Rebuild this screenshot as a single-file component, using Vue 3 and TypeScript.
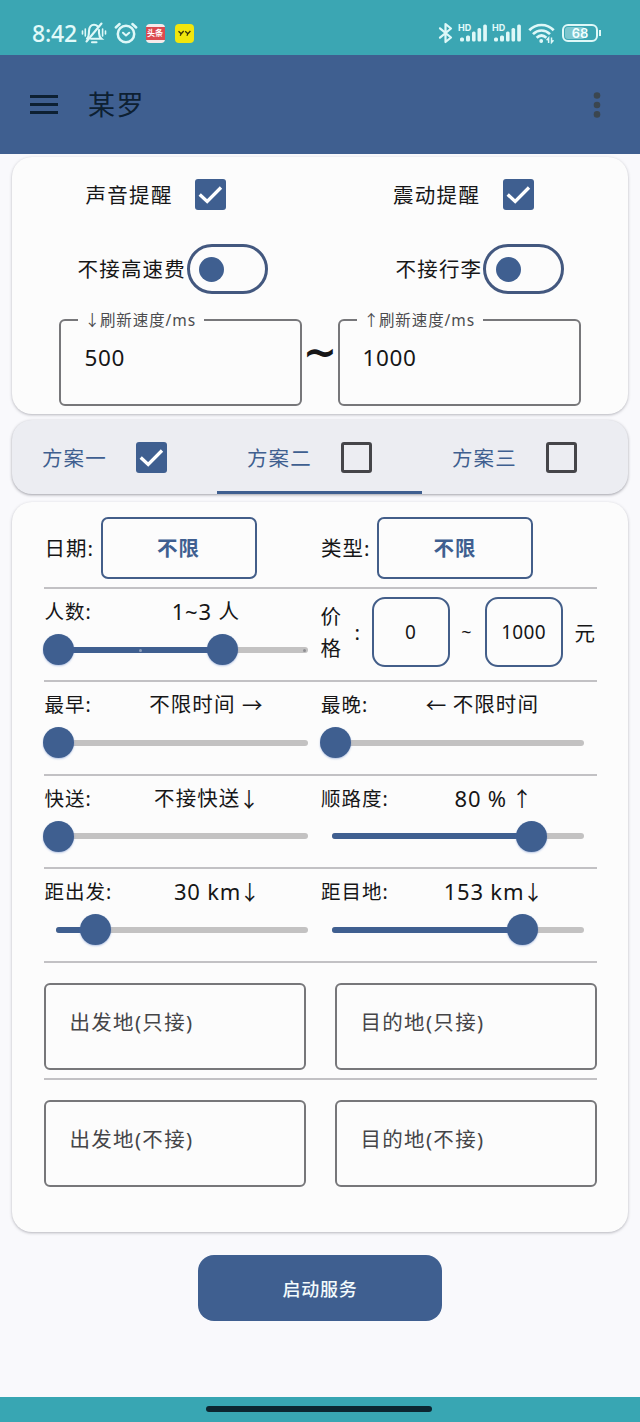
<script setup lang="ts">
import { ref } from 'vue'

interface SliderItem {
  label: string
  value: string
  pos: number
}

interface Part {
  text: string
  kind: string
}

const plans = ref([
  { name: '方案一', checked: true },
  { name: '方案二', checked: false },
  { name: '方案三', checked: false },
])
const activePlan = ref(1)

const reminders = ref([
  { name: '声音提醒', side: 'left' },
  { name: '震动提醒', side: 'right' },
])
const switches = ref([
  { name: '不接高速费', side: 'left' },
  { name: '不接行李', side: 'right' },
])

const sliderRows = ref<SliderItem[][]>([
  [
    { label: '最早:', value: '不限时间 →', pos: 0 },
    { label: '最晚:', value: '← 不限时间', pos: 0 },
  ],
  [
    { label: '快送:', value: '不接快送↓', pos: 0 },
    { label: '顺路度:', value: '80 % ↑', pos: 0.8 },
  ],
  [
    { label: '距出发:', value: '30 km↓', pos: 0.15 },
    { label: '距目地:', value: '153 km↓', pos: 0.765 },
  ],
])

// Splits a caption so that arrows, latin runs and Chinese runs can be set separately.
const parts = (s: string): Part[] =>
  (s.match(/[↑↓]|[←→]|[\x20-\x7e]+|[^\x20-\x7e←→↑↓]+/g) ?? []).map((text) => ({
    text,
    kind: /[↑↓]/.test(text) ? 'vert' : /[←→]/.test(text) ? 'horz' : /^[\x20-\x7e]/.test(text) ? 'latin' : 'han',
  }))

const TRAVEL = 245.3
const thumbStyle = (p: number) => ({ left: `${p * TRAVEL}px` })
const fillStyle = (p: number) => ({ width: p === 0 ? '0px' : `${p * TRAVEL + 3}px` })
</script>

<template>
  <div class="screen">
    <header class="status">
      <span class="time">8:42</span>
      <svg class="i-bell" width="26" height="22" viewBox="0 0 26 22" fill="none" stroke="#dff8f8" stroke-width="2.100" stroke-linecap="round">
        <path d="M6 16.500C8 15 8 13 8 9c0-4 2.200-6.300 5-6.300 1.500 0 2.700.6 3.600 1.600M18 8v3c0 2.600.5 4 2.500 5.700H10" />
        <path d="M20.500 1.500 5.500 19.500" />
        <path d="M11 20.300h4.500" />
        <path d="M4.300 7v7M1.500 9v3M21.600 7v7M24.500 9v3" stroke-width="1.600" />
      </svg>
      <svg class="i-alarm" width="24" height="22" viewBox="0 0 24 22" fill="none" stroke="#dff8f8" stroke-linecap="round" stroke-linejoin="round">
        <circle cx="12" cy="12" r="8.200" stroke-width="2.500" />
        <path d="m9 10.800 3 2.700 3.200-2.700" stroke-width="2.100" />
        <path d="M1.800 5.500 5.600 2M22.200 5.500 18.400 2" stroke-width="2.500" />
      </svg>
      <span class="toutiao"><b>头条</b></span>
      <span class="yy">
        <svg width="19" height="19" viewBox="0 0 19 19" fill="none" stroke="#37330a" stroke-width="1.300">
          <path d="m3.500 7.300 2.700 2.500 2.500-2.800M6.200 9.800l-1 2M10.200 7.300l2.700 2.500L15.400 7M12.900 9.800l-1 2" />
        </svg>
      </span>
      <span class="grow"></span>
      <svg class="i-bt" width="16" height="22" viewBox="0 0 16 22" fill="none" stroke="#dff8f8" stroke-width="2.200" stroke-linejoin="round" stroke-linecap="round">
        <path d="M2 6.300 13 15.500 7.500 20V2L13 6.500 2 15.700" />
      </svg>
      <span v-for="n in 2" :key="n" class="signal">
        <i class="hd">HD</i>
        <svg width="28" height="18" viewBox="0 0 28 18" fill="#dff8f8">
          <rect x="0" y="13.500" width="4" height="4" rx="1.500" />
          <rect x="6" y="11.500" width="4" height="6" rx="1.500" />
          <rect x="12" y="7.500" width="3.600" height="10" rx="1.500" />
          <rect x="17.500" y="4" width="3.600" height="13.500" rx="1.500" />
          <rect x="23.200" y="0.500" width="3.700" height="17" rx="1.500" />
        </svg>
      </span>
      <svg class="i-wifi" width="27" height="21" viewBox="0 0 27 21" fill="none" stroke="#dff8f8" stroke-width="2.700">
        <path d="M1.300 7.300C8 .2 19 .2 25.700 7.300" />
        <path d="M5 11.100c5-4.800 12-4.800 17 0" />
        <path d="M8.600 14.700c3-2.700 6.800-2.700 9.800 0" />
        <circle cx="13.200" cy="18" r="1.300" fill="#dff8f8" stroke-width="1.200" />
        <path d="M20.600 20v-5l-2 2.200M23.500 14.500v5l2-2.200" stroke-width="1.500" />
      </svg>
      <span class="battery"><i class="level"></i><b>68</b></span>
      <i class="nub"></i>
    </header>

    <nav class="appbar">
      <svg width="28" height="20" viewBox="0 0 28 20" fill="#0d2032">
        <rect width="28" height="3" /><rect y="8" width="28" height="3" /><rect y="16" width="28" height="3" />
      </svg>
      <h1>某罗</h1>
      <svg class="more" width="8" height="28" viewBox="0 0 8 28" fill="#3b464f">
        <circle cx="4" cy="4.500" r="3.300" /><circle cx="4" cy="14" r="3.300" /><circle cx="4" cy="23.400" r="3.300" />
      </svg>
    </nav>

    <main>
      <section class="card general">
        <div class="pair reminders">
          <div v-for="r in reminders" :key="r.name" class="reminder" :class="r.side">
            <span>{{ r.name }}</span>
            <i class="check on"><svg width="31" height="31" viewBox="0 0 31 31"><path d="m4.700 15.500 7.500 7L26 8.500" /></svg></i>
          </div>
        </div>
        <div class="pair toggles">
          <div v-for="s in switches" :key="s.name" class="toggle-row" :class="s.side">
            <span>{{ s.name }}</span>
            <i class="toggle"><i></i></i>
          </div>
        </div>
        <div class="speeds">
          <div class="field speed"><label><span class="vert">↓</span>刷新速度/ms</label><span>500</span></div>
          <b class="wave">~</b>
          <div class="field speed"><label><span class="vert">↑</span>刷新速度/ms</label><span>1000</span></div>
        </div>
      </section>

      <section class="tabs">
        <div v-for="(p, i) in plans" :key="p.name" class="tab" :class="{ active: i === activePlan }">
          <span>{{ p.name }}</span>
          <i class="check" :class="{ on: p.checked }"><svg v-if="p.checked" width="31" height="31" viewBox="0 0 31 31"><path d="m4.700 15.500 7.500 7L26 8.500" /></svg></i>
        </div>
      </section>

      <section class="card plan">
        <div class="row choices">
          <div class="col"><span>日期:</span><button>不限</button></div>
          <div class="col"><span>类型:</span><button>不限</button></div>
        </div>
        <div class="row sliders">
          <div class="col">
            <div class="caption">
              <span class="label">人数:</span>
              <span class="value"><span v-for="(p, k) in parts('1~3 人')" :key="k" :class="p.kind">{{ p.text }}</span></span>
            </div>
            <div class="slider">
              <i class="fill" :style="fillStyle(2 / 3)"></i>
              <i class="tick light"></i><i class="tick dark"></i>
              <i class="thumb"></i>
              <i class="thumb" :style="thumbStyle(2 / 3)"></i>
            </div>
          </div>
          <div class="col price">
            <span class="stack">价格</span><span class="colon">:</span>
            <span class="num">0</span><span class="tilde">~</span><span class="num">1000</span>
            <span class="unit">元</span>
          </div>
        </div>
        <div v-for="(row, i) in sliderRows" :key="i" class="row sliders">
          <div v-for="s in row" :key="s.label" class="col">
            <div class="caption">
              <span class="label">{{ s.label }}</span>
              <span class="value"><span v-for="(p, k) in parts(s.value)" :key="k" :class="p.kind">{{ p.text }}</span></span>
            </div>
            <div class="slider">
              <i class="fill" :style="fillStyle(s.pos)"></i>
              <i class="thumb" :style="thumbStyle(s.pos)"></i>
            </div>
          </div>
        </div>
        <div class="row places">
          <div class="field place">出发地(只接)</div>
          <div class="field place">目的地(只接)</div>
        </div>
        <div class="row places last">
          <div class="field place">出发地(不接)</div>
          <div class="field place">目的地(不接)</div>
        </div>
      </section>

      <button class="start">启动服务</button>
    </main>

    <footer><i></i></footer>
  </div>
</template>

<style>
body {
  margin: 0;
}
</style>

<style scoped>
* {
  box-sizing: border-box;
}
.screen {
  width: 640px;
  height: 1422px;
  display: flex;
  flex-direction: column;
  overflow: hidden;
  background: #f9f9fc;
  color: #161617;
  font-family: "Noto Sans", "Noto Sans CJK SC", sans-serif;
  font-size: 20.5px;
  letter-spacing: 1.1px;
  white-space: nowrap;
}
i {
  font-style: normal;
  display: block;
}
svg {
  display: block;
  flex: none;
}
.grow {
  flex: 1;
}
.status {
  height: 55px;
  flex: none;
  background: #3ba6b3;
  display: flex;
  align-items: center;
  padding: 11px 39px 0 32px;
  color: #e2fafa;
}
.time {
  width: 49px;
  font: 500 23px/24px "Noto Sans", sans-serif;
  letter-spacing: -0.2px;
}
.i-alarm {
  margin-left: 6.5px;
}
.toutiao {
  margin-left: 8px;
  width: 19px;
  height: 19px;
  border-radius: 4px;
  background: linear-gradient(#f7eaea 0 3px, #db4a50 3px 16px, #f7eaea 16px);
  display: flex;
  align-items: center;
  justify-content: center;
}
.toutiao b {
  font-size: 8px;
  line-height: 10px;
  letter-spacing: 0;
  color: #fff;
}
.yy {
  margin-left: 10px;
  width: 19px;
  height: 19px;
  border-radius: 4px;
  background: #f2e60c;
}
.signal {
  position: relative;
  width: 28px;
  margin-left: 6px;
}
.i-bt + .signal {
  margin-left: 6px;
}
.hd {
  position: absolute;
  left: -2px;
  top: 0;
  font: 700 9px/8px Inter, sans-serif;
  letter-spacing: 0;
}
.i-wifi {
  margin-left: 6px;
}
.battery {
  position: relative;
  margin-left: 7px;
  width: 36px;
  height: 18px;
  border: 2px solid #dff8f8;
  border-radius: 6px;
  display: flex;
  align-items: center;
  justify-content: center;
}
.battery .level {
  position: absolute;
  inset: 1px auto 1px 1px;
  width: 20px;
  border-radius: 3px;
  background: #7cc6ce;
}
.battery b {
  position: relative;
  font: 600 13px/14px Inter, sans-serif;
  letter-spacing: 0;
  color: #f2ffff;
}
.nub {
  width: 2px;
  height: 6px;
  margin-left: 1px;
  background: #dff8f8;
}
.appbar {
  height: 99px;
  flex: none;
  background: #3f5f90;
  display: flex;
  align-items: center;
  padding: 0 39px 0 30px;
}
h1 {
  flex: 1;
  margin: 0 0 0 30px;
  font-size: 27px;
  font-weight: 400;
  line-height: 40px;
  letter-spacing: 1.5px;
  color: #0d2032;
}
main {
  flex: 1;
  padding: 3px 12px 0;
  display: flex;
  flex-direction: column;
}
.card {
  background: #fcfcfc;
  border-radius: 20px;
  box-shadow: 0 1px 3px rgba(50, 50, 65, 0.34);
}
.general {
  height: 257px;
}
.pair {
  display: flex;
}
.reminder,
.toggle-row {
  width: 307.500px;
  display: flex;
  align-items: center;
}
.reminders {
  padding-top: 21px;
}
.reminder {
  height: 32px;
  padding-left: 73.500px;
}
.reminder span {
  width: 109.500px;
  letter-spacing: 1.3px;
  margin-top: -1px;
}
.check {
  width: 31px;
  height: 31px;
  flex: none;
  border-radius: 3px;
  border: 3px solid #454549;
}
.check.on {
  border: 0;
  background: #3f5f90;
}
.check path {
  fill: none;
  stroke: #fff;
  stroke-width: 3.300;
}
.toggles {
  padding-top: 34px;
}
.toggle-row {
  height: 50px;
  padding-left: 65.500px;
}
.toggle-row span {
  width: 109px;
  margin-top: -2px;
  letter-spacing: 1.2px;
}
.toggle-row.right {
  padding-left: 76px;
}
.toggle-row.right span {
  width: 87.500px;
}
.toggle {
  width: 81px;
  height: 50px;
  border: 3px solid #43587f;
  border-radius: 25px;
  padding: 9.500px 0 0 9.500px;
}
.toggle i {
  width: 25px;
  height: 25px;
  border-radius: 50%;
  background: #3f5f90;
}
.speeds {
  display: flex;
  padding: 25px 0 0 47px;
}
.field {
  border: 2px solid #77777a;
  border-radius: 6px;
}
.speed {
  position: relative;
  width: 243px;
  height: 87px;
  padding: 22px 0 0 23.500px;
  line-height: 30px;
  font-size: 22.500px;
  letter-spacing: 0.6px;
}
.speed + .wave + .speed {
  padding-left: 22.500px;
}
.speed label {
  position: absolute;
  left: 17px;
  top: -14px;
  width: 126px;
  padding-left: 8px;
  background: #fcfcfc;
  color: #4b4b4e;
  font-size: 15.500px;
  line-height: 24px;
  letter-spacing: 0.9px;
}
.speed label .vert {
  margin: 0 0 0 -0.1em;
}
.wave {
  width: 36px;
  display: flex;
  justify-content: center;
  font: 700 41px/66px "DejaVu Sans", sans-serif;
  letter-spacing: 0;
}
.tabs {
  margin-top: 6px;
  height: 74px;
  flex: none;
  border-radius: 20px;
  background: #ecedf2;
  box-shadow: 0 1px 3px rgba(50, 50, 65, 0.45);
  display: flex;
}
.tab {
  width: 205px;
  display: flex;
  align-items: center;
  padding-left: 30px;
  color: #3f5f90;
  border-bottom: 3px solid transparent;
  padding-top: 3px;
}
.tab.active {
  border-color: #3f5f90;
}
.tab span {
  width: 94px;
  margin-top: -1px;
}
.plan {
  margin-top: 8px;
  height: 730px;
  padding: 0 31.500px;
  flex: none;
}
.row {
  height: 93.400px;
  display: flex;
  border-bottom: 2px solid #c2c1c4;
}
.col {
  width: 276.500px;
  flex: none;
}
.choices {
  height: 87px;
}
.choices .col {
  display: flex;
  padding-top: 15px;
  line-height: 62px;
}
.choices span {
  width: 57px;
  padding-left: 1px;
  letter-spacing: 1px;
}
button {
  font: inherit;
  letter-spacing: inherit;
  padding: 0;
}
.choices button {
  width: 156px;
  height: 62px;
  border: 2px solid #435e89;
  border-radius: 7px;
  background: none;
  color: #3f5f90;
  font-weight: 700;
  line-height: 58px;
}
.caption {
  display: flex;
  height: 43.500px;
  line-height: 45px;
}
.label {
  font-size: 19.500px;
  letter-spacing: 1px;
  padding-left: 1px;
}
.value {
  flex: 1;
  display: flex;
  justify-content: center;
}
.value span {
  white-space: pre;
}
.latin {
  font-size: 22px;
  letter-spacing: 0.8px;
}
.vert,
.horz {
  font-family: "Noto Sans CJK SC", sans-serif;
  letter-spacing: 0;
}
.vert {
  margin: 0 -0.08em 0 -0.08em;
}
.slider {
  position: relative;
  width: 252px;
  height: 6px;
  margin: 14px 0 0 12px;
  border-radius: 3px;
  background: #c3c2c2;
}
.fill {
  height: 6px;
  border-radius: 3px;
  background: #3f5f90;
}
.thumb {
  position: absolute;
  left: 0;
  top: -12.500px;
  width: 31px;
  height: 31px;
  margin-left: -12.300px;
  border-radius: 50%;
  background: #3f5f90;
  box-shadow: 0 1px 2px rgba(70, 110, 190, 0.4);
}
.tick {
  position: absolute;
  top: 2px;
  width: 3px;
  height: 3px;
  border-radius: 50%;
}
.tick.light {
  left: 83px;
  background: #8b9dbb;
}
.tick.dark {
  left: 247px;
  background: #8e8e92;
}
.price {
  display: flex;
  align-items: center;
  padding-bottom: 6px;
}
.stack {
  width: 21px;
  margin-left: 0.5px;
  white-space: normal;
  word-break: break-all;
  line-height: 32px;
  letter-spacing: 0;
}
.colon {
  width: 30px;
  padding-left: 13px;
}
.num {
  width: 78px;
  height: 70px;
  border: 2px solid #435e89;
  border-radius: 13px;
  text-align: center;
  line-height: 66px;
  font-size: 19px;
  letter-spacing: 0.3px;
}
.tilde {
  width: 35px;
  text-align: center;
  font-size: 18px;
}
.unit {
  padding-left: 12px;
}
.places {
  height: 117px;
  padding-top: 20.500px;
  gap: 29px;
}
.places.last {
  border: 0;
}
.place {
  width: 262px;
  height: 87px;
  padding: 21px 0 0 24px;
  line-height: 32px;
  letter-spacing: 1.3px;
  color: #454548;
}
.start {
  margin: 23px auto 0;
  width: 244px;
  height: 66px;
  flex: none;
  border: 0;
  border-radius: 16px;
  background: #3f5f90;
  color: #f2fafc;
  font-size: 18px;
  font-weight: 500;
  letter-spacing: 0.7px;
  padding-bottom: 1px;
}
footer {
  height: 25px;
  flex: none;
  background: #38a6b3;
  padding: 9px 0 0 206px;
}
footer i {
  width: 226px;
  height: 6px;
  border-radius: 3px;
  background: #0c2530;
}
</style>
